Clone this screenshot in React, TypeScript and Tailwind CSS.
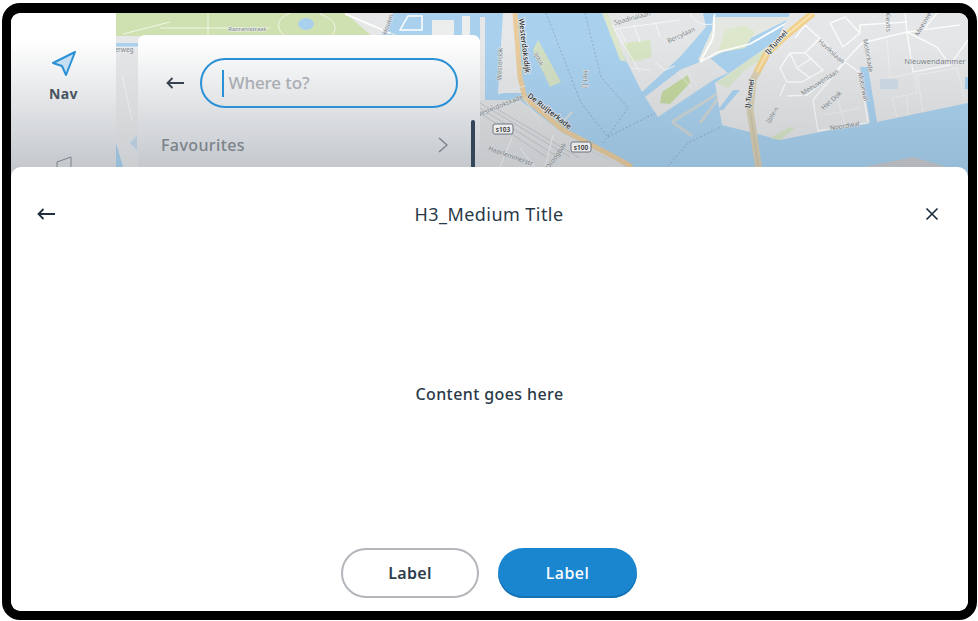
function BackArrow({ className }: { className?: string }) {
  return (
    <svg width="18" height="12" viewBox="0 0 18 12" fill="none" stroke="currentColor" strokeWidth="1.800" className={className}>
      <path d="M18 6H1.500M6.500 1 1.500 6l5 5" />
    </svg>
  )
}

function MapLabel({ x, y, r = 0, size = 7, dark = false, children }: { x: number; y: number; r?: number; size?: number; dark?: boolean; children: string }) {
  return (
    <text
      x={x}
      y={y}
      transform={`rotate(${r} ${x} ${y})`}
      fontSize={size}
      fontWeight={dark ? 500 : 400}
      fontFamily="'Noto Sans', sans-serif"
      textAnchor="middle"
      fill={dark ? '#23262a' : '#7b8288'}
      stroke="#eef0f0"
      strokeWidth={dark ? 1.500 : 0.800}
      paintOrder="stroke"
    >
      {children}
    </text>
  )
}

function Shield({ x, y, label }: { x: number; y: number; label: string }) {
  return (
    <g>
      <rect x={x - 10} y={y - 5} width="20" height="10" rx="2" fill="#fff" stroke="#59616a" strokeWidth="0.800" />
      <text x={x} y={y + 2.500} fontSize="6.500" fontWeight="600" textAnchor="middle" fontFamily="'Noto Sans', sans-serif" fill="#333">
        {label}
      </text>
    </g>
  )
}

function MapArt() {
  return (
    <svg viewBox="116 13 852 164" className="absolute inset-0 h-full w-full" preserveAspectRatio="none">
      <rect x="116" y="13" width="852" height="164" fill="#a9d1ee" />

      {/* west side */}
      <path d="M116 13H393L388 40H480V177H126L116 143Z" fill="#e6e7e8" />
      <path d="M116 13H345L372 36H116Z" fill="#d0e1b1" />
      <path d="M116 43h22v3.500h-22Z" fill="#a9d1ee" />
      <ellipse cx="306" cy="24" rx="8" ry="6" fill="#a9d1ee" />
      <path d="M123 34 170 22M160 28H270M208 13V35M290 13c-14 6-14 16-6 22M320 14c16 6 18 14 12 21M345 13l50 22" stroke="#f1f5e6" strokeWidth="1" fill="none" />
      <path d="M116 48H138M122 75 132 120" stroke="#f5f5f5" strokeWidth="1" fill="none" />
      <path d="m137 134-8 9 8 8" stroke="#dfe9f2" strokeWidth="1.500" fill="#c7d8e8" />
      <path d="M393 13h7l-12 22h-6Z" fill="#a9d1ee" />
      <path d="M423 13h50l7 4v23h-57Z" fill="#a9d1ee" />
      <path d="M432 20h22v20h-22Z" fill="#eceded" />
      <path d="M462 16h8v22h-8Z" fill="#eceded" />
      <path d="M400 30 408 16H422V30ZM345 14l45 19" stroke="#fff" strokeWidth="1.500" fill="none" />
      <path d="M385 36l6-22" stroke="#9a9fa5" strokeWidth="1" strokeDasharray="1.500 1" />
      <path d="M480 17H485V100H480Z" fill="#e6e7e8" />

      {/* westerdok and station */}
      <path d="M503 13H515L523 93H498Z" fill="#e6e7e8" />
      <path d="M533 50 538 40 561 82 550 87Z" fill="#d4e0c4" />
      <path d="M480 100H520L563 133 617 160 640 177H480Z" fill="#dfe0e1" />
      <path d="M480 103 570 157M480 108 560 158M480 113 548 158M490 105 580 158" stroke="#b9bcbf" strokeWidth="0.700" fill="none" />
      <path d="M500 167 512 138M520 148 535 167M553 135 545 167" stroke="#f4f4f4" strokeWidth="1" fill="none" />
      <path d="M515 13 520 77 525 98 563 130 620 160 632 167" stroke="#e9cc9e" strokeWidth="5" fill="none" />
      <path d="M525 98 525 100 540 122M498 94 525 86" stroke="#eef3f6" strokeWidth="0.800" fill="none" />
      <path d="M563 122 572 112M585 148 610 160" stroke="#d6dcdd" strokeWidth="2" fill="none" />

      {/* dashed ferry lines */}
      <path d="M546 13 581 103 608 137 655 113M585 13 601 77 628 108 603 143M668 166 688 143 721 127" stroke="#7f9db5" strokeWidth="0.700" strokeDasharray="2 2" fill="none" />

      {/* central islands */}
      <path d="M602 13H703L706 27 680 57 642 92Z" fill="#e4e5e6" />
      <path d="M602 13H608L626 62 620 60Z" fill="#dbe6cc" />
      <path d="M623 43 650 40 652 57 632 62Z" fill="#d8e5c4" />
      <path d="M615 29 680 20M627 45 620 30M640 42 634 25M660 37 655 22M655 62 665 70 675 66M632 68 650 70M612 25 640 72M690 13C695 25 708 28 725 20" stroke="#f5f6f6" strokeWidth="1" fill="none" />
      <path d="M645 97 680 70 697 63 710 58 728 73 715 79 658 117Z" fill="#e3e4e5" />
      <path d="M662 92 688 75 690 83 670 104 660 103Z" fill="#c5d89f" />
      <path d="M677 72 694 90M684 68 698 87" stroke="#f0f1f1" strokeWidth="0.800" fill="none" />
      <path d="M713 17H790L787 20 703 62 698 60 712 30Z" fill="#e5e7e3" />
      <path d="M725 30 745 25 755 32 745 48 718 53Z" fill="#dce7cc" />
      <path d="M700 62 712 40C716 30 712 20 715 14M700 62 718 52 750 44 790 21" stroke="#fff" strokeWidth="1.800" fill="none" />
      <path d="M672 122 720 92M672 122 692 136M700 123 720 96" stroke="#cdd5d5" strokeWidth="3" fill="none" />

      {/* east side */}
      <path d="M715 83 777 40 790 13H968V103L877 122 870 122 780 140 722 125Z" fill="#e5e6e7" />
      <path d="M716 83 777 40 768 55 745 70 728 88Z" fill="#d9e5cb" />
      <path d="M733 90 740 90 723 110 718 110Z" fill="#a9d1ee" />
      <path d="M770 138 790 127 795 128 780 140Z" fill="#d7e5c5" />
      <path d="M860 67H868L877 122H870Z" fill="#a9d1ee" />
      <path d="M880 79H898V89H880Z" fill="#cfdde8" />
      <path d="M965 77h3v12h-3Z" fill="#a9d1ee" />
      <path d="M787 96 807 95 830 77 862 43 907 32 960 25M907 32 913 72 950 65 937 47 907 32M813 100 845 62 860 73 868 123 818 131 813 100M805 25 825 43 845 62M830 23 845 17 860 33 843 47 830 23M860 33V25L907 22M907 32 905 13M886 13 888 30M780 68 790 53 805 53 823 70 802 82 787 82 780 68M790 53 797 68 810 78M780 96 785 84M805 53 818 40 830 50M797 68 812 58M937 13 925 28M968 40 950 65M805 25 795 38" stroke="#fbfbfb" strokeWidth="1.400" fill="none" />
      <path d="M917 73 923 112M917 75 957 68 965 100M892 98 917 93 915 75M892 98 897 117M907 97 908 115M887 78 915 73M887 40 890 78M825 115 860 108M838 100 845 125" stroke="#f4f4f4" strokeWidth="0.800" fill="none" />
      <path d="M863 167 913 157 947 167V177H863Z" fill="#c8cacc" />

      {/* tunnel */}
      <path d="M783 38 767 53 753 80 750 110 760 177" stroke="#d9cfb4" strokeWidth="7" fill="none" />
      <path d="M750 110 760 177" stroke="#c8bda2" strokeWidth="0.800" fill="none" />
      <path d="M813 13 783 38 767 53 757 72" stroke="#f1d08b" strokeWidth="7" fill="none" />
      <path d="M813 13 783 38 767 53 757 72" stroke="#f7e3b3" strokeWidth="2" fill="none" />

      <MapLabel x={247} y={31} size={6}>Razzanistraat</MapLabel>
      <MapLabel x={124} y={52} size={6.500}>erweg</MapLabel>
      <MapLabel x={390} y={25} r={-70} size={6.500}>Houtm</MapLabel>
      <MapLabel x={522} y={46} r={83} size={7.500} dark>Westerdoksdijk</MapLabel>
      <MapLabel x={502} y={64} r={-88} size={6.500}>Westerdok</MapLabel>
      <MapLabel x={537} y={60} r={62} size={6}>IJdok</MapLabel>
      <MapLabel x={500} y={108} r={-22} size={6.500}>Westerdokskade</MapLabel>
      <MapLabel x={548} y={113} r={38} size={7.500} dark>De Ruijterkade</MapLabel>
      <MapLabel x={510} y={158} r={20} size={6.500}>Haarlemmerstr</MapLabel>
      <MapLabel x={558} y={157} r={-55} size={6.500}>Droogbak</MapLabel>
      <MapLabel x={583} y={79} r={93} size={7}>Het IJ</MapLabel>
      <MapLabel x={633} y={20} r={-15} size={6.500}>Spadinalaan</MapLabel>
      <MapLabel x={682} y={37} r={-25} size={6.500}>Bercylaan</MapLabel>
      <MapLabel x={778} y={44} r={-48} size={7} dark>IJ-Tunnel</MapLabel>
      <MapLabel x={752} y={94} r={-82} size={7} dark>IJ-Tunnel</MapLabel>
      <MapLabel x={774} y={116} r={-58} size={6}>IJplein</MapLabel>
      <MapLabel x={830} y={53} r={42} size={6.500}>Havikslaan</MapLabel>
      <MapLabel x={821} y={84} r={-32} size={6.500}>Meeuwenlaan</MapLabel>
      <MapLabel x={833} y={102} r={-42} size={6.500}>Het Dok</MapLabel>
      <MapLabel x={866} y={56} r={80} size={6.500}>Motorkade</MapLabel>
      <MapLabel x={861} y={87} r={78} size={6.500}>Motorwal</MapLabel>
      <MapLabel x={845} y={128} r={-9} size={6.500}>Noordwal</MapLabel>
      <MapLabel x={935} y={64} size={7.500}>Nieuwendammer</MapLabel>
      <MapLabel x={886} y={22} r={88} size={6.500}>Kievits</MapLabel>
      <MapLabel x={925} y={25} r={-60} size={6.500}>Meeuwe</MapLabel>

      <Shield x={503} y={129} label="s103" />
      <Shield x={581} y={147} label="s100" />
    </svg>
  )
}

export default function App() {
  return (
    <div className="h-[621px] w-[978px] overflow-hidden bg-white pl-[2px] pt-[3px] font-['Noto_Sans',sans-serif]">
      <div className="h-[617px] w-[975px] overflow-hidden rounded-[18px] border-x-[9px] border-t-[10px] border-b-[9px] border-black bg-black">
        <div className="flex h-full flex-col overflow-hidden rounded-[9px] bg-white">
          <div className="flex h-[164px] shrink-0 overflow-hidden">
            <div className="flex w-[105px] shrink-0 flex-col items-center bg-[linear-gradient(to_bottom,#fff_27px,#c4c8cd_154px)] pt-[37px]">
              <svg width="26" height="27" viewBox="0 0 26 27" className="ml-[1px]">
                <path d="M24 2 2 13l9 3 4 9Z" fill="#c7dff3" stroke="#2b91d6" strokeWidth="2" strokeLinejoin="round" />
              </svg>
              <span className="mt-[7px] text-sm font-bold leading-5 tracking-[0.4px] text-[#48545f]">Nav</span>
              <svg width="16" height="14" viewBox="0 0 16 14" fill="none" stroke="#7a828b" strokeWidth="1" className="mt-[52px]">
                <path d="M1 14V6l14-5v13" />
              </svg>
            </div>

            <div className="relative flex-1 overflow-hidden">
              <MapArt />
              <div className="absolute inset-0 bg-[linear-gradient(to_bottom,rgba(30,45,60,0)_17%,rgba(30,45,60,0.13)_94%)]" />
              <div className="relative ml-[22px] mt-[22px] h-[200px] w-[342px] rounded-[7px] bg-[linear-gradient(to_bottom,#fff_5px,#c4c8cd_132px)] pl-[28px] pt-[23px]">
                <div className="flex items-center gap-4">
                  <BackArrow className="text-[#37444f]" />
                  <div className="flex h-[50px] w-[258px] items-center rounded-full border-2 border-[#2b91d6] pl-[20px]">
                    <span className="h-[27px] w-[1.500px] bg-[#2b91d6]" />
                    <span className="ml-[5px] text-[17px] font-medium tracking-[-0.1px] text-[#a9adb3]">Where to?</span>
                  </div>
                </div>
                <div className="mt-[25px] flex w-[282px] items-center justify-between">
                  <span className="-ml-[5px] text-base font-medium leading-6 tracking-[0.4px] text-[#7b828a]">Favourites</span>
                  <svg width="10" height="16" viewBox="0 0 10 16" fill="none" stroke="#7b828a" strokeWidth="1.500">
                    <path d="m1 1 8 7-8 7" />
                  </svg>
                </div>
                <div className="absolute right-[5px] top-[85px] h-[100px] w-[4px] rounded-full bg-[#34465a]" />
              </div>
            </div>
          </div>

          <div className="z-10 -mt-[10px] flex flex-1 flex-col rounded-t-[10px] bg-white">
            <div className="flex items-center pl-[26px] pr-[29px] pt-[35px]">
              <BackArrow className="text-[#1f2f3f]" />
              <span className="flex-1 text-center text-lg leading-6 tracking-[0.45px] text-[#2a3948]">H3_Medium Title</span>
              <div className="flex w-[16px] justify-end">
                <svg width="14" height="14" viewBox="0 0 14 14" stroke="#1f2f3f" strokeWidth="1.700" fill="none">
                  <path d="m1.500 1.500 11 11m0-11-11 11" />
                </svg>
              </div>
            </div>
            <div className="flex flex-1 items-center justify-center pt-[14px]">
              <span className="text-base font-medium leading-6 tracking-[0.4px] text-[#2a3948]">Content goes here</span>
            </div>
            <div className="flex justify-center gap-[19px] pb-[13px] pr-[1px]">
              <button className="h-[50px] w-[138px] rounded-full border-2 border-[#b3b6ba] bg-white text-base font-semibold tracking-[0.3px] text-[#2e3d4c]">
                Label
              </button>
              <button className="h-[50px] w-[139px] rounded-full bg-[#1b86d0] text-base font-medium tracking-[0.5px] text-white shadow-[inset_0_-2px_0_#1672b3]">
                Label
              </button>
            </div>
          </div>
        </div>
      </div>
    </div>
  )
}
